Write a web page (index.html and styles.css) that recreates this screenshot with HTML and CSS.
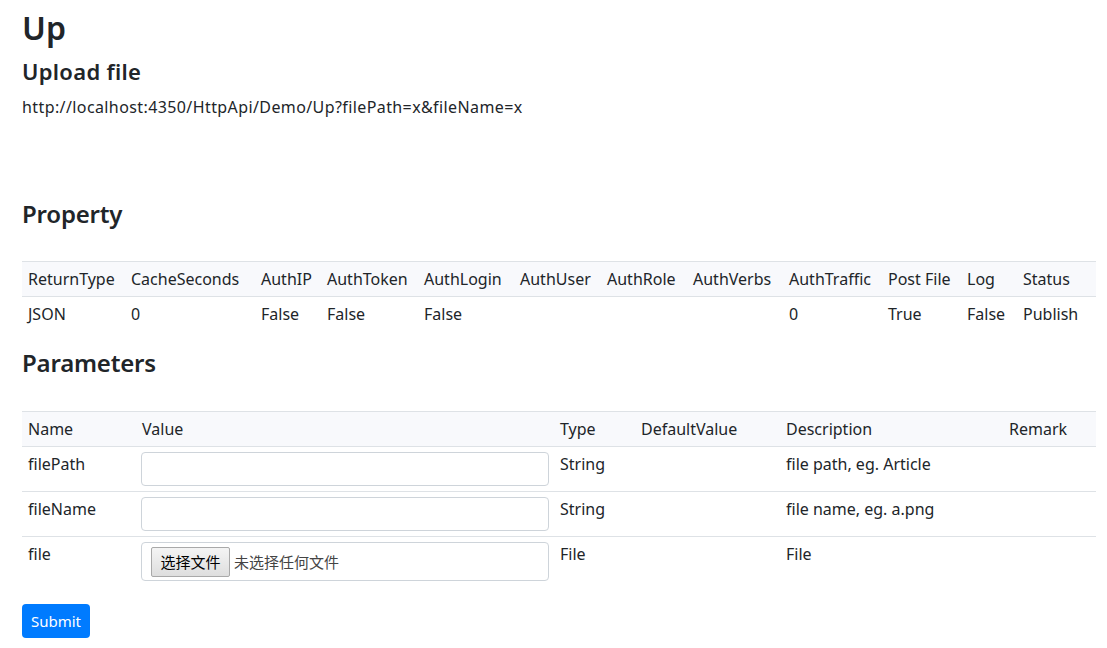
FILE: index.html
```html
<!DOCTYPE html>
<html lang="en">
<head>
<meta charset="utf-8">
<title>Up</title>
<link rel="stylesheet" href="styles.css">
</head>
<body>
<div class="page">
  <h1 class="title">Up</h1>
  <h2 class="subtitle">Upload file</h2>
  <p class="url">http://localhost:4350/HttpApi/Demo/Up?filePath=x&amp;fileName=x</p>

  <h3 class="section section-property">Property</h3>
  <table class="grid grid-props">
    <colgroup>
      <col class="c103"><col class="c130"><col class="c66"><col class="c97"><col class="c96"><col class="c87"><col class="c86"><col class="c96"><col class="c99"><col class="c79"><col class="c56"><col class="c79">
    </colgroup>
    <thead>
      <tr>
        <th>ReturnType</th><th>CacheSeconds</th><th>AuthIP</th><th>AuthToken</th><th>AuthLogin</th><th>AuthUser</th><th>AuthRole</th><th>AuthVerbs</th><th>AuthTraffic</th><th>Post File</th><th>Log</th><th>Status</th>
      </tr>
    </thead>
    <tbody>
      <tr>
        <td>JSON</td><td>0</td><td>False</td><td>False</td><td>False</td><td></td><td></td><td></td><td>0</td><td>True</td><td>False</td><td>Publish</td>
      </tr>
    </tbody>
  </table>

  <h3 class="section section-params">Parameters</h3>
  <form class="params-form" onsubmit="return false;">
    <table class="grid grid-params">
      <colgroup>
        <col class="c114"><col class="c418"><col class="c81"><col class="c145"><col class="c223"><col class="c93">
      </colgroup>
      <thead>
        <tr>
          <th>Name</th><th>Value</th><th>Type</th><th>DefaultValue</th><th>Description</th><th>Remark</th>
        </tr>
      </thead>
      <tbody>
        <tr>
          <td>filePath</td>
          <td><input class="field" type="text" name="filePath"></td>
          <td>String</td><td></td><td>file path, eg. Article</td><td></td>
        </tr>
        <tr>
          <td>fileName</td>
          <td><input class="field" type="text" name="fileName"></td>
          <td>String</td><td></td><td>file name, eg. a.png</td><td></td>
        </tr>
        <tr class="last">
          <td>file</td>
          <td>
            <div class="filebox">
              <span class="filebtn">选择文件</span>
              <span class="filetext">未选择任何文件</span>
            </div>
          </td>
          <td>File</td><td></td><td>File</td><td></td>
        </tr>
      </tbody>
    </table>
    <button class="submit" type="submit">Submit</button>
  </form>
</div>
</body>
</html>
```

FILE: styles.css
```css
* { box-sizing: border-box; }

html, body {
  margin: 0;
  padding: 0;
  background: #ffffff;
}

body {
  font-family: "Noto Sans", "Open Sans", "Noto Sans CJK SC", sans-serif;
  font-size: 16px;
  line-height: 24px;
  color: #212529;
}

.page {
  padding: 9px 11px 0 22px;
}

.title {
  font-size: 32px;
  line-height: 38px;
  font-weight: 600;
  margin: 0;
}

.subtitle {
  font-size: 22px;
  line-height: 26px;
  font-weight: 600;
  margin: 11px 0 0;
  letter-spacing: 0.3px;
}

.url {
  margin: 11px 0 0;
  letter-spacing: 0.4px;
}

.section {
  font-size: 24px;
  line-height: 29px;
  font-weight: 600;
  margin: 0;
  letter-spacing: -0.2px;
}

.section-property { margin-top: 80px; }
.section-params { margin-top: 17px; }

.grid {
  width: 100%;
  border-collapse: collapse;
  table-layout: fixed;
  margin-top: 33px;
}

.grid-params { margin-top: 34px; }

.grid th,
.grid td {
  text-align: left;
  font-weight: 400;
  padding: 5px 4px 5px 6px;
  vertical-align: top;
  white-space: nowrap;
}

.grid thead th {
  background: #f8f9fc;
  border-top: 1px solid #dee2e6;
  border-bottom: 1px solid #dee2e6;
}

.grid-params tbody tr td {
  border-bottom: 1px solid #dee2e6;
}

.grid-params tbody tr.last td {
  border-bottom: none;
}

.grid-params tbody tr td:nth-child(2) {
  padding-left: 5px;
  padding-right: 5px;
}

.c103 { width: 103px; }
.c130 { width: 130px; }
.c66 { width: 66px; }
.c97 { width: 97px; }
.c96 { width: 96px; }
.c87 { width: 87px; }
.c86 { width: 86px; }
.c99 { width: 99px; }
.c79 { width: 79px; }
.c56 { width: 56px; }
.c114 { width: 114px; }
.c418 { width: 418px; }
.c81 { width: 81px; }
.c145 { width: 145px; }
.c223 { width: 223px; }
.c93 { width: 93px; }

.field {
  display: block;
  width: 100%;
  height: 34px;
  border: 1px solid #ced4da;
  border-radius: 4px;
  padding: 4px 10px;
  font: inherit;
  color: #495057;
  background: #fff;
  outline: none;
}

.filebox {
  display: flex;
  align-items: center;
  gap: 4px;
  height: 39px;
  border: 1px solid #ced4da;
  border-radius: 4px;
  padding: 0 9px;
  font-family: "Noto Sans CJK SC", sans-serif;
  font-size: 15px;
}

.filebtn {
  display: inline-flex;
  align-items: center;
  justify-content: center;
  width: 79px;
  height: 30px;
  border: 1px solid #a9a9a9;
  border-radius: 2px;
  background: linear-gradient(#f4f4f4, #dedede);
  color: #000;
  line-height: 1;
}

.filetext {
  color: #444;
  line-height: 1;
}

.submit {
  display: block;
  margin-top: 18px;
  height: 34px;
  width: 68px;
  padding: 0;
  border: none;
  border-radius: 4px;
  background: #007bff;
  color: #fff;
  font-family: "Noto Sans", sans-serif;
  font-size: 15px;
  line-height: 34px;
  text-align: center;
}
```
